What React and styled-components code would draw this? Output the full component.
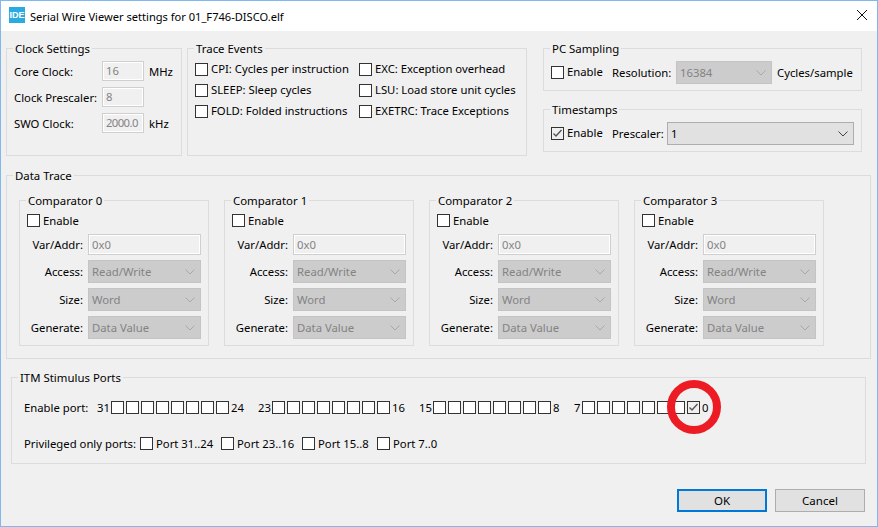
import React from "react";
import styled, { createGlobalStyle } from "styled-components";

const GlobalStyle = createGlobalStyle`
  html, body {
    margin: 0;
    padding: 0;
    background: #f0f0f0;
  }
  * {
    box-sizing: border-box;
  }
`;

const Window = styled.div`
  position: relative;
  width: 878px;
  height: 527px;
  display: flex;
  flex-direction: column;
  border: 1px solid #7fb7ee;
  background: #f0f0f0;
  font-family: "Noto Sans", "Open Sans", sans-serif;
  font-size: 11.3px;
  color: #000;
  overflow: hidden;
`;

const TitleBar = styled.div`
  display: flex;
  align-items: center;
  height: 30px;
  flex: none;
  padding: 0 10px 0 8px;
  background: #fff;
`;

const Logo = styled.div`
  width: 16px;
  height: 16px;
  margin: 0 5px 2px 0;
  background: #29abe2;
  color: #fff;
  font-family: "Liberation Sans", sans-serif;
  font-size: 9px;
  font-weight: bold;
  line-height: 16px;
  text-align: center;
`;

const Title = styled.div`
  flex: 1;
  font-size: 11.1px;
`;

const CloseIcon = styled.svg`
  margin-bottom: 2px;
`;

const Body = styled.div`
  flex: 1;
  display: flex;
  flex-direction: column;
  padding: 17px 0 0 5px;
`;

const TopRow = styled.div`
  display: flex;
  height: 108px;
`;

const RightColumn = styled.div`
  display: flex;
  flex-direction: column;
  margin-left: 16px;
  width: 319px;
`;

const Group = styled.div`
  position: relative;
  border: 1px solid #dcdcdc;
  width: ${({ $w }) => $w}px;
  height: ${({ $h }) => $h}px;
  margin-left: ${({ $ml }) => $ml || 0}px;
  margin-top: ${({ $mt }) => $mt || 0}px;
  padding: ${({ $p }) => $p || "0"};
  flex: none;
`;

const Legend = styled.span`
  position: absolute;
  top: -8px;
  left: 6px;
  padding: 0 2px;
  height: 16px;
  line-height: 16px;
  font-size: 11.4px;
  background: #f0f0f0;
`;

const FormGrid = styled.div`
  display: grid;
  grid-template-columns: ${({ $cols }) => $cols};
  column-gap: ${({ $colGap }) => $colGap || 0}px;
  row-gap: ${({ $gap }) => $gap}px;
  margin-top: ${({ $mt }) => $mt || 0}px;
  align-items: center;
`;

const Label = styled.span`
  white-space: nowrap;
  padding-left: ${({ $pl }) => $pl || 0}px;
  text-align: ${({ $right }) => ($right ? "right" : "left")};
`;

const TextInput = styled.div`
  height: ${({ $h }) => $h}px;
  padding-left: 3px;
  border: 1px solid #cfcfcf;
  box-shadow: inset 0 0 0 1px #fff;
  background: #f0f0f0;
  color: #838383;
  line-height: ${({ $h }) => $h - 2}px;
  letter-spacing: ${({ $tight }) => ($tight ? "-0.6px" : "0")};
  white-space: nowrap;
  overflow: hidden;
`;

const SelectBox = styled.div`
  display: flex;
  align-items: center;
  justify-content: space-between;
  flex: none;
  height: 23px;
  width: ${({ $w }) => ($w ? `${$w}px` : "auto")};
  padding: 0 5px 0 3px;
  border: 1px solid ${({ $disabled }) => ($disabled ? "#c4c4c4" : "#adadad")};
  background: ${({ $disabled }) => ($disabled ? "#cccccc" : "#e1e1e1")};
  color: ${({ $disabled }) => ($disabled ? "#838383" : "#000")};
  white-space: nowrap;
`;

const Box = styled.span`
  display: inline-flex;
  align-items: center;
  justify-content: center;
  width: 13px;
  height: 13px;
  flex: none;
  border: 1px solid #333;
  background: ${({ $checked }) => ($checked ? "#f0f0f0" : "#fff")};
`;

const CheckRow = styled.div`
  display: flex;
  align-items: center;
  gap: 3px;
  height: 13px;
  white-space: nowrap;
`;

const CheckText = styled.span`
  margin-bottom: ${({ $lift }) => $lift}px;
`;

const TraceBody = styled.div`
  display: grid;
  grid-template-columns: 164px 1fr;
  grid-auto-rows: 21px;
  align-items: center;
  padding: 10px 0 0 7px;
`;

const InlineRow = styled.div`
  display: flex;
  align-items: center;
`;

const Slot = styled.div`
  width: ${({ $w }) => $w}px;
  flex: none;
  white-space: nowrap;
`;

const Comparators = styled.div`
  display: flex;
  gap: 15px;
`;

const PortRow = styled.div`
  display: flex;
  align-items: center;
  height: 13px;
  margin-top: ${({ $mt }) => $mt || 0}px;
`;

const PortLabel = styled.span`
  width: ${({ $w }) => $w}px;
  flex: none;
  white-space: nowrap;
  padding-left: ${({ $pl }) => $pl || 0}px;
`;

const BitBoxes = styled.div`
  display: flex;
  gap: 2px;
  flex: none;
`;

const PrivItem = styled.div`
  display: flex;
  align-items: center;
  gap: 3px;
  width: ${({ $w }) => $w}px;
  flex: none;
  white-space: nowrap;
`;

const Footer = styled.div`
  display: flex;
  justify-content: flex-end;
  gap: 8px;
  margin-top: 25px;
  padding-right: 12px;
`;

const Button = styled.div`
  width: 90px;
  height: 23px;
  border: ${({ $primary }) => ($primary ? "2px solid #0078d7" : "1px solid #adadad")};
  background: #e1e1e1;
  display: flex;
  align-items: center;
  justify-content: center;
  font-size: 11.5px;
`;

const Ring = styled.div`
  position: absolute;
  left: 666px;
  top: 379px;
  width: 54px;
  height: 54px;
  border: 8px solid #ed1c24;
  border-radius: 50%;
  pointer-events: none;
`;

const Chevron = ({ color }) => (
  <svg width="10" height="6" viewBox="0 0 10 6">
    <path d="M0.5 0.5 L5 5 L9.5 0.5" fill="none" stroke={color} strokeWidth="1" />
  </svg>
);

const Check = () => (
  <svg width="11" height="11" viewBox="0 0 11 11">
    <path d="M1.5 5.5 L4 8 L9.5 2" fill="none" stroke="#555" strokeWidth="1.4" />
  </svg>
);

const CheckBox = ({ checked, lift = 2, children }) => (
  <CheckRow>
    <Box $checked={checked}>{checked && <Check />}</Box>
    <CheckText $lift={lift}>{children}</CheckText>
  </CheckRow>
);

const Select = ({ value, w, disabled }) => (
  <SelectBox $w={w} $disabled={disabled}>
    <span>{value}</span>
    <Chevron color={disabled ? "#a8a8a8" : "#444"} />
  </SelectBox>
);

const traceEvents = [
  "CPI: Cycles per instruction",
  "EXC: Exception overhead",
  "SLEEP: Sleep cycles",
  "LSU: Load store unit cycles",
  "FOLD: Folded instructions",
  "EXETRC: Trace Exceptions",
];

const ComparatorGroup = ({ index }) => (
  <Group $w={190} $h={146} $p="13px 7px 0 7px">
    <Legend>Comparator {index}</Legend>
    <CheckBox lift={0}>Enable</CheckBox>
    <FormGrid $cols="56px 113px" $colGap={5} $gap={5} $mt={7}>
      <Label $right>Var/Addr:</Label>
      <TextInput $h={21}>0x0</TextInput>
      <Label $right>Access:</Label>
      <Select value="Read/Write" disabled />
      <Label $right>Size:</Label>
      <Select value="Word" disabled />
      <Label $right>Generate:</Label>
      <Select value="Data Value" disabled />
    </FormGrid>
  </Group>
);

const portGroups = [
  { from: 31, to: 24, w: 29 },
  { from: 23, to: 16, w: 29 },
  { from: 15, to: 8, w: 23 },
];

const Bits = ({ count, checkedLast }) => (
  <BitBoxes>
    {Array.from({ length: count }).map((_, i) => (
      <Box key={i} $checked={checkedLast && i === count - 1}>
        {checkedLast && i === count - 1 && <Check />}
      </Box>
    ))}
  </BitBoxes>
);

export default function App() {
  return (
    <>
      <GlobalStyle />
      <Window>
        <TitleBar>
          <Logo>IDE</Logo>
          <Title>Serial Wire Viewer settings for 01_F746-DISCO.elf</Title>
          <CloseIcon width="10" height="10" viewBox="0 0 10 10">
            <path d="M0 0 L10 10 M10 0 L0 10" stroke="#111" strokeWidth="1" />
          </CloseIcon>
        </TitleBar>
        <Body>
          <TopRow>
            <Group $w={176} $h={108} $p="12px 0 0 7px">
              <Legend>Clock Settings</Legend>
              <FormGrid $cols="88px 42px 1fr" $gap={6}>
                <Label>Core Clock:</Label>
                <TextInput $h={20}>16</TextInput>
                <Label $pl={5}>MHz</Label>
                <Label>Clock Prescaler:</Label>
                <TextInput $h={20}>8</TextInput>
                <span />
                <Label>SWO Clock:</Label>
                <TextInput $h={20} $tight>2000.0</TextInput>
                <Label $pl={5}>kHz</Label>
              </FormGrid>
            </Group>
            <Group $w={340} $h={108} $ml={5}>
              <Legend>Trace Events</Legend>
              <TraceBody>
                {traceEvents.map((t) => (
                  <CheckBox key={t}>{t}</CheckBox>
                ))}
              </TraceBody>
            </Group>
            <RightColumn>
              <Group $w={319} $h={43} $p="12px 0 0 7px">
                <Legend>PC Sampling</Legend>
                <InlineRow>
                  <Slot $w={61}><CheckBox>Enable</CheckBox></Slot>
                  <Slot $w={64}>Resolution:</Slot>
                  <Select value="16384" w={96} disabled />
                  <Label $pl={5}>Cycles/sample</Label>
                </InlineRow>
              </Group>
              <Group $w={319} $h={43} $mt={18} $p="12px 0 0 7px">
                <Legend>Timestamps</Legend>
                <InlineRow>
                  <Slot $w={61}><CheckBox checked>Enable</CheckBox></Slot>
                  <Slot $w={55}>Prescaler:</Slot>
                  <Select value="1" w={187} />
                </InlineRow>
              </Group>
            </RightColumn>
          </TopRow>
          <Group $w={865} $h={184} $mt={19} $p="24px 0 0 12px">
            <Legend>Data Trace</Legend>
            <Comparators>
              {[0, 1, 2, 3].map((i) => (
                <ComparatorGroup key={i} index={i} />
              ))}
            </Comparators>
          </Group>
          <Group $w={855} $h={87} $ml={5} $mt={18} $p="23px 0 0 12px">
            <Legend>ITM Stimulus Ports</Legend>
            <PortRow>
              <PortLabel $w={73}>Enable port:</PortLabel>
              {portGroups.map((g) => (
                <React.Fragment key={g.from}>
                  <PortLabel $w={14}>{g.from}</PortLabel>
                  <Bits count={8} />
                  <PortLabel $w={g.w} $pl={2}>{g.to}</PortLabel>
                </React.Fragment>
              ))}
              <PortLabel $w={8}>7</PortLabel>
              <Bits count={8} checkedLast />
              <PortLabel $w={14} $pl={2}>0</PortLabel>
            </PortRow>
            <PortRow $mt={23}>
              <PortLabel $w={116}>Privileged only ports:</PortLabel>
              <PrivItem $w={81}><Box /><span>Port 31..24</span></PrivItem>
              <PrivItem $w={81}><Box /><span>Port 23..16</span></PrivItem>
              <PrivItem $w={75}><Box /><span>Port 15..8</span></PrivItem>
              <PrivItem $w={75}><Box /><span>Port 7..0</span></PrivItem>
            </PortRow>
          </Group>
          <Footer>
            <Button $primary>OK</Button>
            <Button>Cancel</Button>
          </Footer>
        </Body>
        <Ring />
      </Window>
    </>
  );
}
